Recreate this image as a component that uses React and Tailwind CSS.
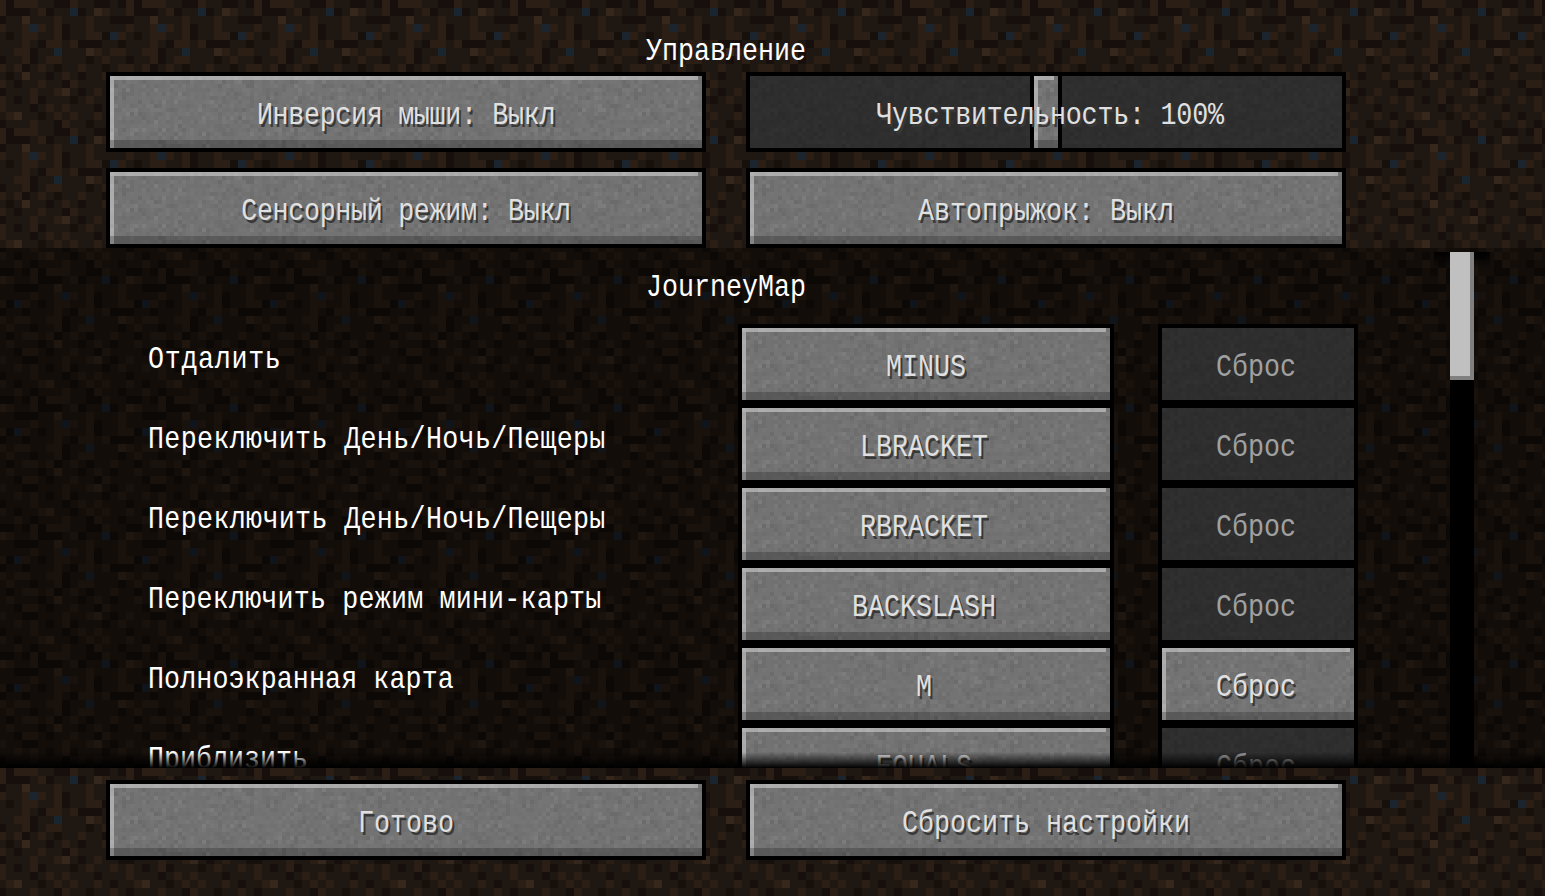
const dirtRows = [
  'cacccbbaacbbaaba',
  'caaabcabbeabdcbb',
  'abbdbbbcbbbcbbaa',
  'cbbcecbcabbcbbbb',
  'babccbbcabbccaec',
  'bbbcbaccbcaaabba',
  'bbccabbebbbdcbcc',
  'abbcabccbbbabcbb',
  'cbcabcbabbcbbabc',
  'babdbbabcbabbcbb',
  'cbabbcbbacbbbbac',
  'abbbcbbcdbabcbba',
  'cbabcabbbabcbbcb',
  'cbbbabcbcbbbabbb',
  'bcdbbabcbcbbcbab',
  'abbbcbbacbbabbcb',
]
const dirtColors = { a: '#160f0b', b: '#1f1711', c: '#2a1e15', d: '#35271b', e: '#1b2530' }

const stoneLevels = ['#6b6b6b', '#6e6e6e', '#717171', '#737373', '#757575', '#787878', '#7c7c7c']

function stonePaths() {
  let seed = 4242
  const paths = stoneLevels.map(() => '')
  for (let y = 0; y < 20; y++) {
    for (let x = 0; x < 64; x++) {
      seed = (seed * 1103515245 + 12345) % 2147483648
      const r = seed / 2147483648
      seed = (seed * 1103515245 + 12345) % 2147483648
      const s = seed / 2147483648
      const level = Math.min(6, Math.max(0, Math.round(((r + s) / 2) * 7 - 0.5)))
      paths[level] += `M${x * 4} ${y * 4}h4v4h-4z`
    }
  }
  return paths
}

const stone = stonePaths()

function DirtCells() {
  return dirtRows.map((row, y) =>
    row.split('').map((cell, x) => (
      <rect key={`${x}-${y}`} x={x * 8} y={y * 8} width="8" height="8" fill={dirtColors[cell]} />
    ))
  )
}

function Textures() {
  return (
    <svg className="absolute size-0">
      <defs>
        <pattern id="dirt" width="128" height="128" x="-2" y="0" patternUnits="userSpaceOnUse">
          <DirtCells />
        </pattern>
        <pattern id="dirt-list" width="128" height="128" x="30" y="20" patternUnits="userSpaceOnUse">
          <DirtCells />
        </pattern>
        <pattern id="stone" width="256" height="80" patternUnits="userSpaceOnUse">
          {stone.map((d, i) => (
            <path key={i} d={d} fill={stoneLevels[i]} />
          ))}
        </pattern>
      </defs>
    </svg>
  )
}

function Label({ children, className = '' }) {
  return <span className={`inline-block scale-y-[1.2] whitespace-pre ${className}`}>{children}</span>
}

function Stone() {
  return (
    <svg className="absolute inset-0 w-full h-full">
      <rect width="100%" height="100%" fill="url(#stone)" />
    </svg>
  )
}

function Bevel() {
  return (
    <>
      <Stone />
      <div className="absolute inset-0 shadow-[inset_0_-8px_0_rgba(0,0,0,0.22),inset_4px_4px_0_rgba(255,255,255,0.4)]" />
      <div className="absolute top-0 right-0 size-1 bg-[#737373]" />
    </>
  )
}

function Button({ children, width = 'w-[600px]', disabled = false, track = '', inset = '' }) {
  return (
    <div className={`relative h-20 shrink-0 border-4 border-black ${width}`}>
      {disabled ? (
        <>
          <Stone />
          <div className="absolute inset-0 bg-black/60" />
        </>
      ) : (
        <Bevel />
      )}
      <div className={`relative flex h-full items-center justify-center pt-2 ${inset}`}>
        {disabled ? (
          <Label className={`text-[#a0a0a0] ${track}`}>{children}</Label>
        ) : (
          <Label className={`text-[#e0e0e0] [text-shadow:2px_2px_0_#383838] ${track}`}>{children}</Label>
        )}
      </div>
    </div>
  )
}

function Slider({ children }) {
  return (
    <div className="relative h-20 w-[600px] shrink-0 border-4 border-black">
      <Stone />
      <div className="absolute inset-0 bg-black/60" />
      <div className="absolute -top-1 left-[280px] h-20 w-8 border-4 border-black">
        <Bevel />
      </div>
      <div className="relative flex h-full items-center justify-center pt-2 pl-2">
        <Label className="text-[#e0e0e0] [text-shadow:2px_2px_0_#383838] tracking-[-0.2px]">{children}</Label>
      </div>
    </div>
  )
}

const keys = [
  { label: 'Отдалить', key: 'MINUS', canReset: false, track: 'tracking-[0.7px]' },
  { label: 'Переключить День/Ночь/Пещеры', key: 'LBRACKET', canReset: false, track: 'tracking-[0.35px]' },
  { label: 'Переключить День/Ночь/Пещеры', key: 'RBRACKET', canReset: false, track: 'tracking-[0.35px]' },
  { label: 'Переключить режим мини-карты', key: 'BACKSLASH', canReset: false, track: 'tracking-[0.2px]' },
  { label: 'Полноэкранная карта', key: 'M', canReset: true, track: 'tracking-[0.1px]' },
  { label: 'Приблизить', key: 'EQUALS', canReset: false, track: '' },
]

function KeyRow({ label, keyName, canReset, track }) {
  return (
    <div className="flex h-20 pl-[148px]">
      <div className="w-[590px] shrink-0 pt-[23px] text-white">
        <Label className={track}>{label}</Label>
      </div>
      <Button width="w-[376px]" inset={keyName === 'MINUS' ? '' : 'pr-1'}>{keyName}</Button>
      <div className="ml-11">
        <Button width="w-[200px]" disabled={!canReset} inset="pr-1">Сброс</Button>
      </div>
    </div>
  )
}

export default function App() {
  return (
    <div className="relative flex h-[896px] w-[1545px] flex-col overflow-hidden bg-[#1f1711] font-['Liberation_Mono',monospace] text-[26.67px] leading-none">
      <Textures />
      <svg className="absolute inset-0 w-full h-full">
        <rect width="100%" height="100%" fill="url(#dirt)" />
      </svg>

      <div className="relative ml-[106px] h-[248px] w-[1240px] shrink-0">
        <div className="flex h-[72px] items-start justify-center pt-[39px] text-white">
          <Label>Управление</Label>
        </div>
        <div className="grid grid-cols-2 gap-x-10 gap-y-4">
          <Button track="tracking-[-0.3px]">Инверсия мыши: Выкл</Button>
          <Slider>Чувствительность: 100%</Slider>
          <Button track="tracking-[-0.3px]">Сенсорный режим: Выкл</Button>
          <Button>Автопрыжок: Выкл</Button>
        </div>
      </div>

      <div className="relative h-[520px] shrink-0 overflow-hidden">
        <svg className="absolute inset-0 w-full h-full">
          <rect width="100%" height="100%" fill="url(#dirt-list)" />
          <rect width="100%" height="100%" fill="#000" opacity="0.42" />
        </svg>
        <div className="relative">
          <div className="ml-[106px] flex h-[76px] w-[1240px] items-start justify-center pt-[27px] text-white">
            <Label>JourneyMap</Label>
          </div>
          {keys.map((row, i) => (
            <KeyRow key={i} label={row.label} keyName={row.key} canReset={row.canReset} track={row.track} />
          ))}
        </div>
        <div className="absolute top-1 right-[55px] h-4 w-14 bg-linear-to-b from-black to-transparent" />
        <div className="absolute top-1 right-[71px] bottom-0 w-6 bg-black">
          <div className="h-32 w-6 bg-[#c0c0c0] shadow-[inset_-4px_-4px_0_#808080]" />
        </div>
        <div className="absolute inset-x-0 bottom-0 h-4 bg-linear-to-b from-transparent to-black" />
      </div>

      <div className="relative ml-[106px] grid w-[1240px] grid-cols-2 gap-x-10 pt-3">
        <Button>Готово</Button>
        <Button>Сбросить настройки</Button>
      </div>
    </div>
  )
}
